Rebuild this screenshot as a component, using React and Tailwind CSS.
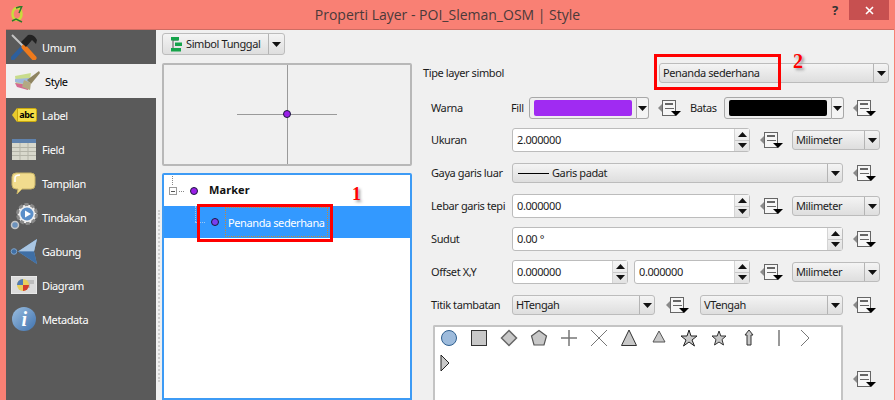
import React from 'react';

const FONT = "font-['Noto_Sans',sans-serif]";

// data-defined override button
const DataIcon = () => (
  <svg width="23" height="17" viewBox="0 0 23 17" className="shrink-0">
    <path d="M0 8 L5 3 V13 Z" fill="#8a8a8a" />
    <rect x="4.5" y="0.5" width="13" height="15" fill="#f6f6f6" stroke="#666" />
    <rect x="7" y="3" width="8" height="2" fill="#666" />
    <rect x="7" y="8" width="9" height="1" fill="#666" />
    <path d="M13 11 H23 L18 16 Z" fill="#000" />
  </svg>
);

const Arrow = ({ up }) => (
  <svg width="9" height="5" viewBox="0 0 9 5">
    <path d={up ? 'M0 5 L4.5 0 L9 5 Z' : 'M0 0 L4.5 5 L9 0 Z'} fill="#111" />
  </svg>
);

const Combo = ({ children, className = '' }) => (
  <div className={`h-[20px] flex items-center justify-between rounded-[3px] border border-[#bcbcbc] bg-gradient-to-b from-[#f4f4f4] to-[#dedede] ${className}`}>
    <div className="pl-[3px] flex items-center min-w-0 whitespace-nowrap">{children}</div>
    <div className="w-[15px] h-full border-l border-[#b4b4b4] flex items-center justify-center shrink-0"><Arrow /></div>
  </div>
);

const Spin = ({ value, className = '' }) => (
  <div className={`h-[24px] flex items-center justify-between rounded-[3px] border border-[#bcbcbc] bg-white ${className}`}>
    <span className="pl-[4px]">{value}</span>
    <div className="w-[15px] h-full border-l border-[#d4d4d4] flex flex-col shrink-0 bg-gradient-to-b from-[#f6f6f6] to-[#e2e2e2]">
      <div className="flex-1 flex items-center justify-center border-b border-[#c8c8c8]"><Arrow up /></div>
      <div className="flex-1 flex items-center justify-center"><Arrow /></div>
    </div>
  </div>
);

const ColorButton = ({ color }) => (
  <div className="flex">
    <div className="w-[108px] h-[22px] rounded-l-[3px] border border-[#a8a8a8] bg-[#eeeeee] px-[4px] py-[2px]">
      <div className="w-full h-full rounded-[2px]" style={{ background: color }} />
    </div>
    <div className="w-[12px] h-[22px] rounded-r-[3px] border border-l-0 border-[#a8a8a8] bg-[#f4f4f4] flex items-center justify-center"><Arrow /></div>
  </div>
);

const Row = ({ label, children }) => (
  <div className="flex items-center h-[33px] pt-[1px]">
    <span className="w-[89px] pl-[8px] shrink-0 whitespace-nowrap">{label}</span>
    {children}
  </div>
);

const Unit = () => <Combo className="w-[88px]">Milimeter</Combo>;

const UmumIcon = () => (
  <svg width="26" height="26" viewBox="0 0 26 26">
    <path d="M2 24 L15 10" stroke="#2d5f9e" strokeWidth="4.5" strokeLinecap="round" />
    <path d="M1 1 L13 13" stroke="#c4c4c4" strokeWidth="2" />
    <path d="M13 13 L23 24" stroke="#ee7a1c" strokeWidth="5" strokeLinecap="round" />
    <path d="M10 8 L17 1 Q23 0 26 6 L25 10 L21 6 L15 13 Z" fill="#222" />
  </svg>
);

const StyleIcon = () => (
  <svg width="26" height="22" viewBox="0 0 26 22">
    <path d="M1 6 L17 3 L14 20 L2 15 Z" fill="#c8dc8c" />
    <path d="M1 9 L16 8 L14 15 L1 12 Z" fill="#9fb8dc" />
    <path d="M1 13 L14 15 L14 20 L3 17 Z" fill="#d46a92" />
    <path d="M13 10 L25 1 L26 3 L17 14 Z" fill="#8e8460" />
    <path d="M10 10 L17 13 L16 20 L8 17 Z" fill="#b3a983" />
  </svg>
);

const LabelIcon = () => (
  <div className="flex items-center">
    <div className="w-0 h-0 border-y-[7px] border-y-transparent border-r-[5px] border-r-[#e9c92c]" />
    <div className="w-[20px] h-[14px] bg-[#f5de45] border border-[#c9a80f] rounded-r-[2px] text-black font-bold text-[9px] leading-[12px] text-center">abc</div>
  </div>
);

const FieldIcon = () => (
  <svg width="24" height="21" viewBox="0 0 24 21">
    <rect width="24" height="21" fill="#d8d8cc" />
    <rect width="24" height="4" fill="#5f82ad" />
    <path d="M0 8.5H24M0 12.5H24M0 16.5H24M8 4V21M16 4V21" stroke="#b4b4a8" />
  </svg>
);

const TampilanIcon = () => (
  <svg width="26" height="23" viewBox="0 0 26 23">
    <path d="M5 1 H20 Q24 1 24 5 V13 Q24 17 20 17 H11 L6 22 L7 17 H5 Q1 17 1 13 V5 Q1 1 5 1 Z" fill="#f1dc8e" stroke="#c6b266" />
    <path d="M4 10 V6 Q4 3 9 3" stroke="#fff" strokeWidth="1.5" fill="none" />
  </svg>
);

const TindakanIcon = () => (
  <svg width="28" height="28" viewBox="0 0 28 28">
    <circle cx="17" cy="11" r="9.5" fill="#f0f0f0" stroke="#8a8a8a" strokeWidth="3" strokeDasharray="4 2" />
    <circle cx="17" cy="11" r="6.5" fill="#5b8fc9" />
    <path d="M15 7.5 L21 11 L15 14.5 Z" fill="#fff" />
    <circle cx="5" cy="22" r="3.5" fill="#6d93bd" stroke="#c4c4c4" strokeWidth="1.5" />
  </svg>
);

const GabungIcon = () => (
  <svg width="29" height="25" viewBox="0 0 29 25">
    <circle cx="4" cy="12.5" r="2.8" fill="#3f6fa5" stroke="#7fa3c9" />
    <path d="M8 12.5 L27 0 L24 12.5 L27 25 Z" fill="#6f9ccb" />
    <path d="M8 12.5 L27 0 L24 12.5 Z" fill="#a9c6e3" />
    <path d="M8 12.5 L27 25 L24 12.5 Z" fill="#3f6fa5" />
  </svg>
);

const DiagramIcon = () => (
  <svg width="26" height="18" viewBox="0 0 26 18">
    <rect width="26" height="18" fill="#dcdcdc" stroke="#f4f4f4" />
    <path d="M15 4H23V8H19V12H15Z" fill="#bdbdbd" />
    <circle cx="12" cy="9" r="6" fill="#e8cf5a" />
    <path d="M12 9 L18 9 A6 6 0 0 1 12 15 Z" fill="#d43c2c" />
    <path d="M12 9 V3 A6 6 0 0 0 6 9 Z" fill="#4f79b4" />
  </svg>
);

const MetadataIcon = () => (
  <div className="w-[24px] h-[24px] rounded-full bg-gradient-to-br from-[#9cbfe0] to-[#3f72ae] flex items-center justify-center font-['Liberation_Serif',serif] italic font-bold text-white text-[20px] leading-none">i</div>
);

const tabs = [
  ['Umum', <UmumIcon />],
  ['Style', <StyleIcon />],
  ['Label', <LabelIcon />],
  ['Field', <FieldIcon />],
  ['Tampilan', <TampilanIcon />],
  ['Tindakan', <TindakanIcon />],
  ['Gabung', <GabungIcon />],
  ['Diagram', <DiagramIcon />],
  ['Metadata', <MetadataIcon />],
];

const Sidebar = () => (
  <div className="w-[150px] shrink-0 bg-[#5a5a5a]">
    {tabs.map(([name, icon]) => (
      <div
        key={name}
        className={`h-[34px] flex items-center ${name === 'Style' ? 'bg-[#f0f0f0] text-black' : 'text-white'}`}
      >
        <div className={`w-[36px] flex justify-center shrink-0 ${name === 'Style' ? 'pl-[5px]' : ''}`}>{icon}</div>
        <span className={`pt-[2px] ${name === 'Style' ? 'pl-[3px]' : ''}`}>{name}</span>
      </div>
    ))}
  </div>
);

const Dot = ({ color = '#9a1fe8' }) => (
  <div className="w-[8px] h-[8px] rounded-full border border-[#1a1a3a]" style={{ background: color }} />
);

const SymbolColumn = () => (
  <div className="w-[250px] shrink-0 ml-[6px] pt-[3px] flex flex-col">
    <div className="w-[123px] h-[22px] flex rounded-[3px] border border-[#bcbcbc] bg-gradient-to-b from-[#f4f4f4] to-[#dedede]">
      <div className="flex-1 flex items-center pl-[7px] gap-[4px]">
        <svg width="12" height="15" viewBox="0 0 12 15">
          <path d="M3 1V13M3 3H8M3 12H8" stroke="#555" fill="none" />
          <rect x="1" y="0" width="8" height="3.5" fill="#16a34a" />
          <rect x="5" y="5.5" width="7" height="3.5" fill="#16a34a" />
          <rect x="1" y="11" width="10" height="3.5" fill="#16a34a" />
        </svg>
        <span className="whitespace-nowrap">Simbol Tunggal</span>
      </div>
      <div className="w-[16px] border-l border-[#b4b4b4] flex items-center justify-center"><Arrow /></div>
    </div>

    <div className="mt-[8px] h-[103px] relative rounded-[2px] border-2 border-[#b8b8b8] bg-[#f0f0f0]">
      <div className="absolute left-[123px] top-0 bottom-0 w-px bg-[#9a9a9a]" />
      <div className="absolute left-[73px] top-[49px] w-[100px] h-px bg-[#9a9a9a]" />
      <div className="absolute left-[119px] top-[45px]"><Dot /></div>
    </div>

    <div className="mt-[7px] flex-1 rounded-t-[2px] border-2 border-[#3d9bf5] bg-white">
      <div className="h-[31px] relative flex items-center font-bold text-[#111] tracking-[0.1px]">
        <div className="absolute left-[8px] top-[1px] h-[9px] border-l border-dotted border-[#888]" />
        <div className="absolute left-[5px] top-[12px] w-[8px] h-[8px] border border-[#999] flex items-center justify-center">
          <div className="w-[4px] h-px bg-[#555]" />
        </div>
        <div className="absolute left-[15px] top-[16px] w-[5px] border-t border-dotted border-[#888]" />
        <div className="ml-[26px]"><Dot /></div>
        <span className="ml-[11px]">Marker</span>
      </div>
      <div className="h-[32px] relative bg-[#3399ff] text-white flex items-center">
        <div className="absolute left-[31px] top-0 h-[16px] border-l border-dotted border-[#9cc8f4]" />
        <div className="absolute left-[31px] top-[16px] w-[10px] border-t border-dotted border-[#9cc8f4]" />
        <div className="ml-[47px]"><Dot color="#7a3ff0" /></div>
        <span className="ml-[6px] px-[2px] h-[30px] leading-[30px] border border-dotted border-[#c58a3a] whitespace-nowrap">Penanda sederhana</span>
      </div>
    </div>
  </div>
);

const markerShapes = [
  <circle cx="9" cy="9" r="7.5" fill="#9dbbdc" stroke="#2f5f8f" />,
  <rect x="1.5" y="1.5" width="15" height="15" fill="#c8c8c8" stroke="#333" />,
  <path d="M9 1.5 L16.5 9 L9 16.5 L1.5 9 Z" fill="#c8c8c8" stroke="#666" strokeWidth="1.5" />,
  <path d="M9 1.5 L16.5 7 L14 16 H4 L1.5 7 Z" fill="#c8c8c8" stroke="#555" strokeWidth="1.2" />,
  <path d="M9 1V17M1 9H17" stroke="#777" strokeWidth="1.5" fill="none" />,
  <path d="M1 1L17 17M17 1L1 17" stroke="#777" fill="none" />,
  <path d="M9 1 L16.5 16.5 H1.5 Z" fill="#c8c8c8" stroke="#333" />,
  <path d="M9 2 L15 13 H3 Z" fill="#c8c8c8" stroke="#555" />,
  <path d="M9 1 L11 7 L17 7 L12 11 L14.5 17 L9 13 L3.5 17 L6 11 L1 7 L7 7 Z" fill="#c8c8c8" stroke="#222" />,
  <path d="M9 2 L10.8 7 L16 7 L12 10.5 L13.5 16 L9 13 L4.5 16 L6 10.5 L2 7 L7.2 7 Z" fill="#c8c8c8" stroke="#333" />,
  <path d="M9 1 L13 6 H11 V16 H7 V6 H5 Z" fill="#c8c8c8" stroke="#333" />,
  <path d="M9 1V17" stroke="#777" strokeWidth="1.5" fill="none" />,
  <path d="M1 1 L9 9 L1 17" stroke="#777" fill="none" />,
];

const MarkerCell = ({ children }) => (
  <svg width="18" height="18" viewBox="0 0 18 18">{children}</svg>
);

const SettingsColumn = () => (
  <div className="flex-1 pl-[11px] pr-[6px]">
    <div className="h-[66px] flex items-center pt-[20px]">
      <span className="w-[236px] shrink-0">Tipe layer simbol</span>
      <Combo className="w-[230px]">Penanda sederhana</Combo>
    </div>
    <div className="flex items-center h-[33px] mt-[-6px] pt-[3px]">
      <span className="w-[88px] pl-[8px] shrink-0">Warna</span>
      <span className="w-[18px] shrink-0">Fill</span>
      <ColorButton color="#a02bf2" />
      <div className="ml-[9px]"><DataIcon /></div>
      <span className="ml-[9px] w-[34px]">Batas</span>
      <ColorButton color="#000000" />
      <div className="ml-[9px]"><DataIcon /></div>
    </div>
    <Row label="Ukuran">
      <Spin value="2.000000" className="w-[238px]" />
      <div className="ml-[10px] mr-[9px]"><DataIcon /></div>
      <Unit />
    </Row>
    <Row label="Gaya garis luar">
      <Combo className="w-[331px]"><span className="ml-[2px] w-[31px] h-[1px] mr-[3px] border-t border-black" />Garis padat</Combo>
      <div className="ml-[10px]"><DataIcon /></div>
    </Row>
    <Row label="Lebar garis tepi">
      <Spin value="0.000000" className="w-[238px]" />
      <div className="ml-[10px] mr-[9px]"><DataIcon /></div>
      <Unit />
    </Row>
    <Row label="Sudut">
      <Spin value="0.00 °" className="w-[331px]" />
      <div className="ml-[10px]"><DataIcon /></div>
    </Row>
    <Row label="Offset X,Y">
      <Spin value="0.000000" className="w-[116px]" />
      <Spin value="0.000000" className="w-[116px] ml-[6px]" />
      <div className="ml-[10px] mr-[9px]"><DataIcon /></div>
      <Unit />
    </Row>
    <Row label="Titik tambatan">
      <Combo className="w-[143px]">HTengah</Combo>
      <div className="ml-[11px] mr-[11px]"><DataIcon /></div>
      <Combo className="w-[143px]">VTengah</Combo>
      <div className="ml-[10px]"><DataIcon /></div>
    </Row>
    <div className="flex items-start mt-[4px]">
      <div className="ml-[10px] w-[410px] h-[90px] rounded-t-[2px] border-2 border-b-0 border-[#c4c4c4] bg-white pl-[5px] pt-[2px] flex flex-wrap content-start gap-x-[12px] gap-y-[7px]">
        {markerShapes.map((s, i) => <MarkerCell key={i}>{s}</MarkerCell>)}
        <MarkerCell><path d="M1 1 L9 9 L1 17 Z" fill="#c8c8c8" stroke="#222" /></MarkerCell>
      </div>
      <div className="ml-[10px] mt-[46px]"><DataIcon /></div>
    </div>
  </div>
);

export default function App() {
  return (
    <div className={`relative w-[895px] h-[400px] overflow-hidden bg-[#f98074] flex flex-col text-[11px] tracking-[-0.4px] text-[#1c1c1c] ${FONT}`}>
      <div className="h-[29px] shrink-0 relative flex items-center justify-center">
        <svg width="14" height="17" viewBox="0 0 14 17" className="absolute left-[10px] top-[6px]">
          <ellipse cx="7" cy="8" rx="4.5" ry="6" fill="none" stroke="#c8dc3c" strokeWidth="2.5" />
          <path d="M6 2 L12 0 L9 7 M2 15 L6 13 L12 16" stroke="#2f7a2a" strokeWidth="1.5" fill="none" />
        </svg>
        <span className="text-[14px] tracking-normal text-[#4a3a3a] font-['Open_Sans',sans-serif]">Properti Layer - POI_Sleman_OSM | Style</span>
        <span className="absolute left-[832px] top-[1px] text-[13px] font-bold text-[#333]">?</span>
        <div className="absolute left-[849px] top-0 w-[40px] h-[20px] bg-[#c75050] flex items-center justify-center">
          <svg width="9" height="9" viewBox="0 0 9 9"><path d="M1 1L8 8M8 1L1 8" stroke="#fff" strokeWidth="1.6" /></svg>
        </div>
      </div>
      <div className="flex-1 min-h-0 flex ml-[6px] mr-[1px] border-t border-[#cf6c62] bg-[#f0f0f0]">
        <Sidebar />
        <SymbolColumn />
        <SettingsColumn />
      </div>

      {/* splitter grip and annotations on top of the screenshot */}
      <div className="absolute left-[158px] top-[210px] h-[172px] border-l-2 border-dotted border-[#cfcfcf]" />
      <div className="absolute left-[197px] top-[204px] w-[136px] h-[38px] border-[3px] border-[#ff0000]" />
      <div className="absolute left-[654px] top-[54px] w-[127px] h-[36px] border-[3px] border-[#ff0000]" />
      <span className="absolute left-[352px] top-[181px] text-[18px] font-bold text-[#ff0000] font-['Liberation_Serif',serif] [text-shadow:2px_2px_3px_#999]">1</span>
      <span className="absolute left-[793px] top-[46px] text-[20px] font-bold text-[#ff0000] font-['Liberation_Serif',serif] [text-shadow:2px_2px_3px_#999]">2</span>
    </div>
  );
}
